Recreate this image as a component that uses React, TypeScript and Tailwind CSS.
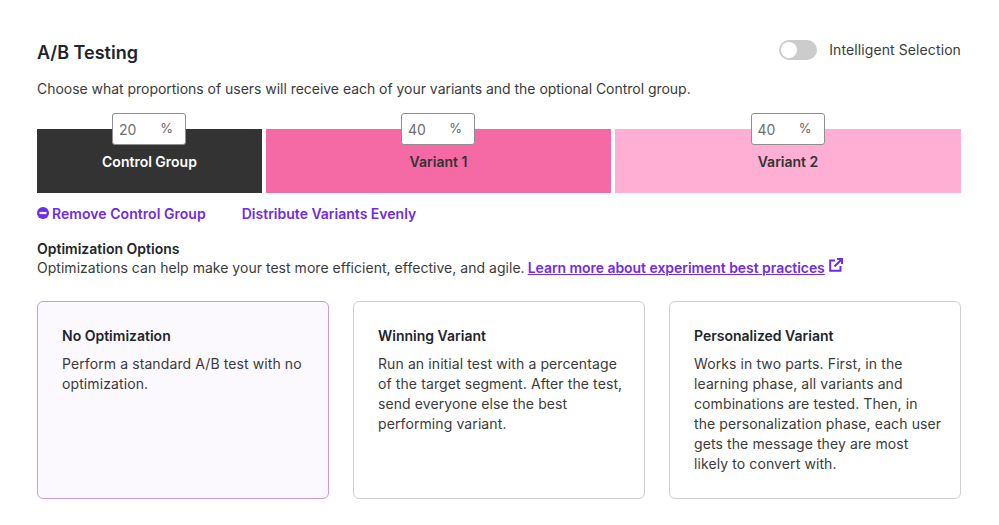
import React from "react";

function Bar({ value, label, className, text }: { value: string; label: string; className: string; text: string }) {
  return (
    <div className={`relative h-16 flex items-center justify-center pt-[1px] ${className}`}>
      <div className="absolute left-[calc(50%-37.5px)] top-[-16px] w-[74px] h-8 bg-white border border-[#8f8f8f] rounded-[3px] flex items-center justify-between pl-[6px] pr-[12px] text-[14px] text-[#6e6e6e]">
        <span className="mt-[1px]">{value}</span>
        <span className="text-[13px] text-[#666] mt-[-1px]">%</span>
      </div>
      <span className={`text-[14px] font-semibold ${text}`}>{label}</span>
    </div>
  );
}

function Card({ title, body, active }: { title: string; body: string; active?: boolean }) {
  return (
    <div className={`w-[292px] h-[198px] rounded-[6px] border pt-[24px] pl-6 pr-[18px] ${active ? "border-[#c29cf0] bg-[#fbf8fe]" : "border-[#d0d0d0] bg-white"}`}>
      <h3 className="text-[14px] leading-5 font-semibold text-[#21252c]">{title}</h3>
      <p className="mt-[8px] text-[14px] leading-5 tracking-[0.1px] text-[#3b3b3b]">{body}</p>
    </div>
  );
}

export default function App() {
  return (
    <div className="w-[999px] h-[525px] bg-white overflow-hidden pl-[37px] pr-[38px] pt-[39px] text-[#3b3b3b] font-['Inter',sans-serif]">
      <div className="flex items-center justify-between h-6">
        <h1 className="mt-[3px] text-[18px] leading-6 font-semibold text-[#21252c]">A/B Testing</h1>
        <div className="flex items-center gap-3 mt-[-2px]">
          <div className="w-[38px] h-5 rounded-full bg-[#cccccc] p-[2px]">
            <div className="w-4 h-4 rounded-full bg-white" />
          </div>
          <span className="text-[14px] leading-5 tracking-[0.1px]">Intelligent Selection</span>
        </div>
      </div>
      <p className="mt-[16px] text-[14px] leading-5 tracking-[-0.03px]">
        Choose what proportions of users will receive each of your variants and the optional Control group.
      </p>
      <div className="mt-[30px] flex gap-1">
        <Bar value="20" label="Control Group" className="w-[225px] bg-[#333333]" text="text-white" />
        <Bar value="40" label="Variant 1" className="w-[345px] bg-[#f569a5]" text="text-[#333333]" />
        <Bar value="40" label="Variant 2" className="w-[346px] bg-[#ffafd3]" text="text-[#333333]" />
      </div>
      <div className="mt-[10px] flex items-center h-5 text-[14px] font-semibold text-[#6f2be8]">
        <svg viewBox="0 0 12 12" className="w-3 h-3 mr-[3px]" aria-hidden="true">
          <circle cx="6" cy="6" r="6" fill="#6f2be8" />
          <rect x="2.5" y="4.9" width="7" height="2.2" fill="#fff" />
        </svg>
        <span className="tracking-[0.05px]">Remove Control Group</span>
        <span className="ml-[36px]">Distribute Variants Evenly</span>
      </div>
      <h2 className="mt-[16px] text-[14px] leading-5 font-semibold text-[#21252c]">Optimization Options</h2>
      <p className="mt-[-1px] text-[14px] leading-5 flex items-center">
        <span className="tracking-[0.027px]">Optimizations can help make your test more efficient, effective, and agile.</span>
        <a className="ml-[3px] font-semibold text-[#6f2be8] underline tracking-[-0.05px]">Learn more about experiment best practices</a>
        <svg viewBox="0 0 14 14" className="w-[14px] h-[14px] ml-1 mt-[-6px]" fill="none" stroke="#6f2be8" strokeWidth="2" aria-hidden="true">
          <path d="M6 2.5H1.2v10.3h10.3V8" />
          <path d="M5.5 8.5 13 1M8 1h5V6" />
        </svg>
      </p>
      <div className="mt-[23px] flex gap-6">
        <Card active title="No Optimization" body="Perform a standard A/B test with no optimization." />
        <Card title="Winning Variant" body="Run an initial test with a percentage of the target segment. After the test, send everyone else the best performing variant." />
        <Card title="Personalized Variant" body="Works in two parts. First, in the learning phase, all variants and combinations are tested. Then, in the personalization phase, each user gets the message they are most likely to convert with." />
      </div>
    </div>
  );
}
